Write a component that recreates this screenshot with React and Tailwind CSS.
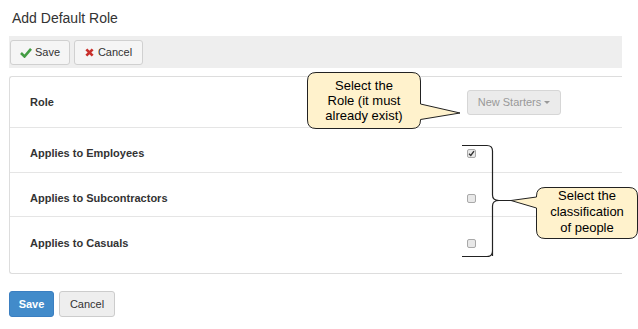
import React from "react";

const font = { fontFamily: '"Liberation Sans", Arial, sans-serif' };

function Check({ className = "" }) {
  return (
    <svg width="12" height="11" viewBox="0 0 12 11" className={className}>
      <path d="M1 6 L4.5 9.5 L11 1.8" fill="none" stroke="currentColor" strokeWidth="2.6" />
    </svg>
  );
}

function Cross() {
  return (
    <svg width="9" height="9" viewBox="0 0 10 10">
      <path d="M1.5 1.5 L8.5 8.5 M8.5 1.5 L1.5 8.5" stroke="#c9302c" strokeWidth="3" />
    </svg>
  );
}

function Row({ label, children, h }) {
  return (
    <div className={`flex items-center border-b border-[#e5e5e5] last:border-b-0 ${h}`}>
      <div className="w-[436px] pl-[20px] text-[11px] font-bold text-[#333]">{label}</div>
      <div className="flex-1">{children}</div>
    </div>
  );
}

function Box({ checked }) {
  return (
    <div className="ml-[21px] flex h-[9px] w-[9px] items-center justify-center rounded-[2px] border border-[#a9a9a9] bg-[#e8e8e8]">
      {checked && (
        <svg width="7" height="7" viewBox="0 0 7 7">
          <path d="M1 3.8 L2.8 5.5 L6 1.2" fill="none" stroke="#333" strokeWidth="1.4" />
        </svg>
      )}
    </div>
  );
}

export default function App() {
  return (
    <div className="relative h-[329px] w-[638px] overflow-hidden bg-white" style={font}>
      <div className="pl-[12px] pt-[9px] text-[14px] leading-[18px] text-[#333]">Add Default Role</div>
      <div className="ml-[9px] mt-[9px] flex h-[32px] w-[613px] items-center gap-[4px] bg-[#eeeeee] pl-[1px]">
        <button className="flex h-[25px] w-[60px] items-center justify-center gap-[3px] rounded-[3px] border border-[#d0d0d0] bg-[#f5f5f5] text-[11px] text-[#333]">
          <Check className="text-[#449d44]" />
          Save
        </button>
        <button className="flex h-[25px] w-[69px] items-center justify-center gap-[4px] rounded-[3px] border border-[#d0d0d0] bg-[#f5f5f5] text-[11px] text-[#333]">
          <Cross />
          Cancel
        </button>
      </div>
      <div className="ml-[9px] mt-[8px] w-[613px] rounded-l-[3px] border-y border-l border-[#dddddd]">
        <Row label="Role" h="h-[51px]">
          <div className="ml-[21px] flex h-[25px] w-[94px] items-center justify-center gap-[3px] rounded-[3px] border border-[#d6d6d6] bg-[#ebebeb] text-[11px] text-[#999]">
            New Starters
            <span className="inline-block border-x-[3px] border-t-[3px] border-x-transparent border-t-[#999]" />
          </div>
        </Row>
        <Row label="Applies to Employees" h="h-[45px] pt-[6px]">
          <Box checked />
        </Row>
        <Row label="Applies to Subcontractors" h="h-[44px] pt-[7px]">
          <Box />
        </Row>
        <Row label="Applies to Casuals" h="h-[56px] pb-[3px]">
          <Box />
        </Row>
      </div>
      <div className="ml-[9px] mt-[17px] flex gap-[5px]">
        <button className="h-[26px] w-[45px] rounded-[3px] border border-[#3b7fc1] bg-[#428bca] text-[11px] font-bold text-white">
          Save
        </button>
        <button className="h-[26px] w-[56px] rounded-[3px] border border-[#cccccc] bg-[#eeeeee] text-[11px] text-[#333]">
          Cancel
        </button>
      </div>

      {/* annotations */}
      <svg className="absolute left-0 top-0" width="638" height="329" viewBox="0 0 638 329">
        <path
          d="M316 72.5 H412 Q420.5 72.5 420.5 81 V104 L460 113 L420.5 119.5 V120 Q420.5 128.5 412 128.5 H316 Q307.5 128.5 307.5 120 V81 Q307.5 72.5 316 72.5 Z"
          fill="#fff2cc"
          stroke="#222"
          strokeWidth="1"
        />
        <path
          d="M545 187.5 H629 Q637.5 187.5 637.5 196 V230 Q637.5 238.5 629 238.5 H545 Q536.5 238.5 536.5 230 V208 L511 200.5 L536.5 197 V196 Q536.5 187.5 545 187.5 Z"
          fill="#fff2cc"
          stroke="#222"
          strokeWidth="1"
        />
        <path
          d="M462 145.5 H487 Q492.5 145.5 492.5 151 V195 Q492.5 200.5 499 200.5 H511 M492.5 256 V206 Q492.5 200.5 499 200.5 M462 256.5 H487 Q492.5 256.5 492.5 251"
          fill="none"
          stroke="#222"
          strokeWidth="1.2"
        />
      </svg>
      <div className="absolute left-[308px] top-[78px] w-[112px] text-center text-[13px] leading-[15px] text-black">
        Select the
        <br />
        Role (it must
        <br />
        already exist)
      </div>
      <div className="absolute left-[537px] top-[188px] w-[100px] text-center text-[13px] leading-[16px] text-black">
        Select the
        <br />
        classification
        <br />
        of people
      </div>
    </div>
  );
}
